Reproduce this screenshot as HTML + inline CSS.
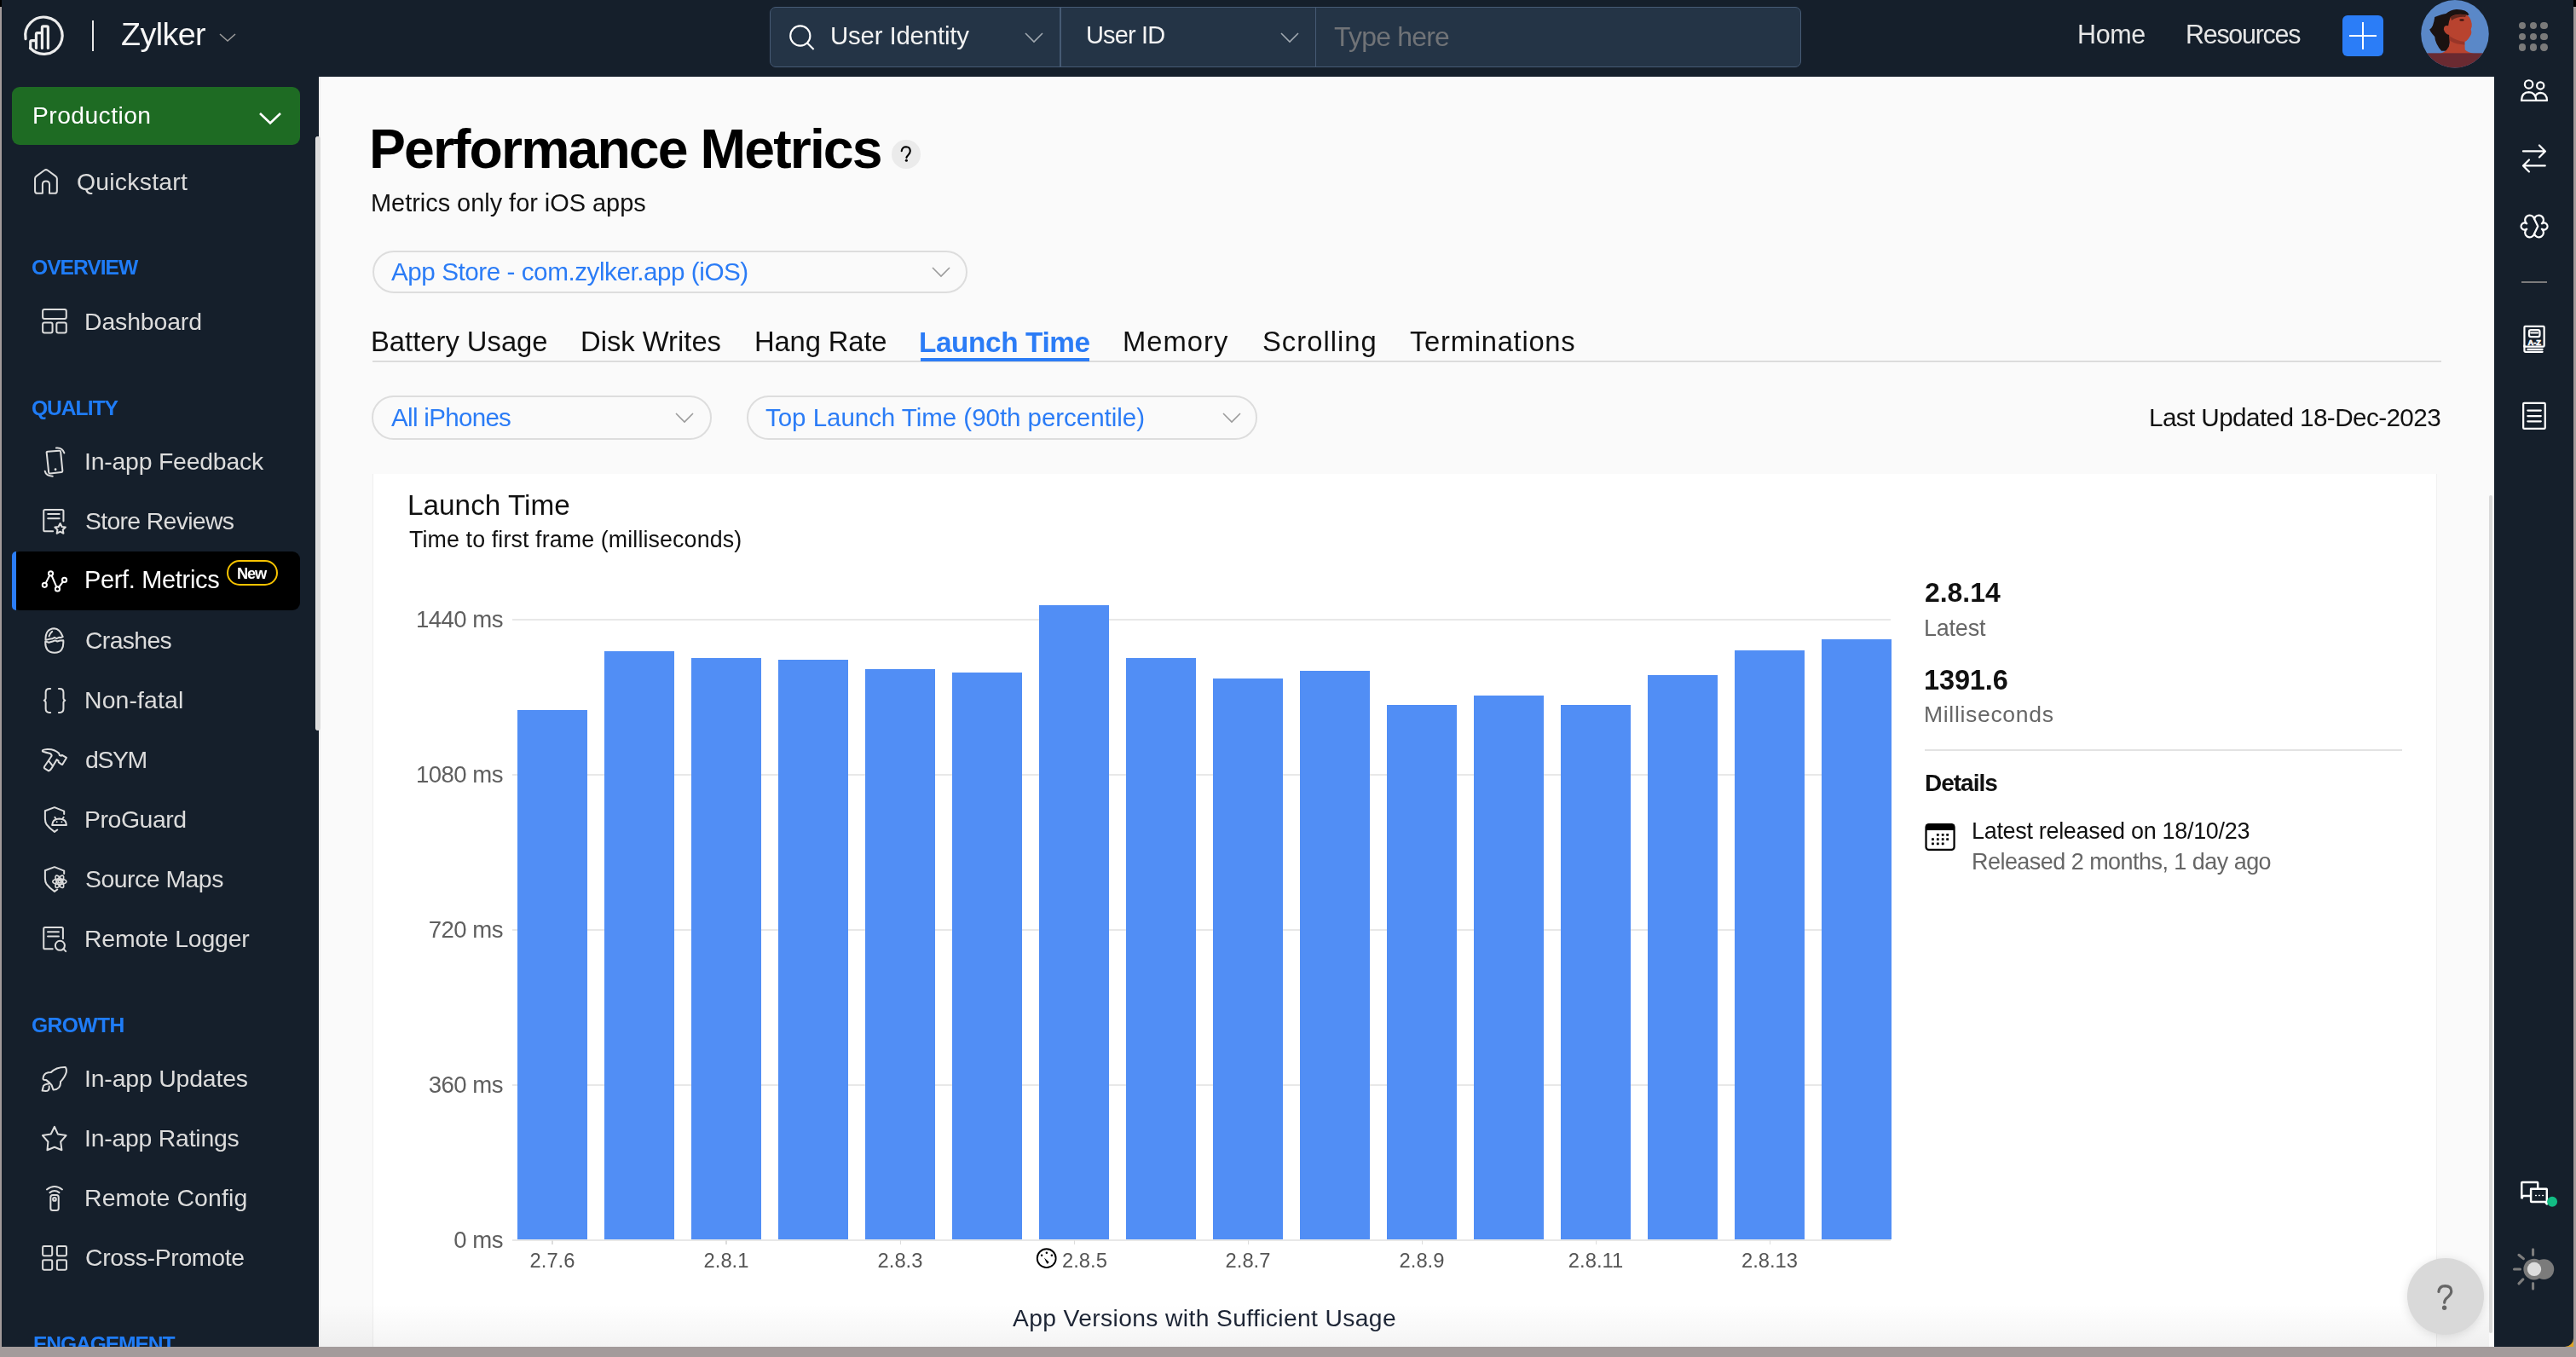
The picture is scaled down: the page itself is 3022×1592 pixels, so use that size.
<!DOCTYPE html>
<html><head><meta charset="utf-8"><title>Performance Metrics</title>
<style>
html,body{margin:0;padding:0;width:3022px;height:1592px;overflow:hidden;background:#a39b9b;}
body{position:relative;font-family:'Liberation Sans', sans-serif;}
.b{position:absolute;}
.t{position:absolute;white-space:nowrap;font-family:'Liberation Sans', sans-serif;will-change:transform;}
#root{position:absolute;left:0;top:0;width:3022px;height:1592px;transform-origin:0 0;overflow:hidden;background:#a39b9b;}
</style></head><body><div id="root">
<div class="b" style="left:0px;top:0px;width:3022px;height:1592px;background:#a39b9b;"></div>
<div class="b" style="left:0px;top:0px;width:3px;height:8px;background:#000;"></div>
<div class="b" style="left:3019px;top:0px;width:3px;height:8px;background:#000;"></div>
<div class="b" style="left:2px;top:0px;width:3017px;height:1580px;background:#151f2b;border-bottom-right-radius:10px;"></div>
<div class="b" style="left:3004px;top:1565px;width:15px;height:15px;background:#e0a526;z-index:0;"></div>
<div class="b" style="left:2px;top:0px;width:3017px;height:1580px;background:#151f2b;border-bottom-right-radius:10px;"></div>
<div class="b" style="left:374px;top:90px;width:2552px;height:1490px;background:#fafafa;"></div>
<svg class="b" style="left:20px;top:10px;width:70px;height:70px" viewBox="0 0 1357 1357">
<g fill="none" stroke="#ececec" stroke-width="62" stroke-linecap="round" stroke-linejoin="round">
<path d="M195 690 A420 420 0 1 1 300 900"/>
<path d="M305 905 V760 Q305 730 335 730 H435 V585 Q435 555 465 555 H570 V435 Q570 405 600 405 H675 Q705 405 705 435 V900"/>
<path d="M435 730 V900 M570 555 V900"/>
</g></svg>
<div class="b" style="left:107.5px;top:24px;width:2.5px;height:36px;background:#e6e6e6;"></div>
<div class="t" id="zylker" style="left:142.0px;top:22.0px;font-size:37.68px;line-height:37.68px;color:#f5f5f5;letter-spacing:-0.600px;">Zylker</div>
<svg class="b" style="left:256px;top:38px;width:22px;height:12px" viewBox="0 0 22 12"><path d="M2 2 L11 10 L20 2" fill="none" stroke="#9a9a9a" stroke-width="1.6"/></svg>
<div class="b" style="left:903px;top:8px;width:1210px;height:71px;background:#243446;border:1.6px solid #465a74;border-radius:7px;box-sizing:border-box;"></div>
<div class="b" style="left:1243.3px;top:9px;width:1.6px;height:69px;background:#465a74;"></div>
<div class="b" style="left:1542.9px;top:9px;width:1.6px;height:69px;background:#465a74;"></div>
<svg class="b" style="left:920px;top:24px;width:40px;height:40px" viewBox="0 0 40 40"><circle cx="18.8" cy="18" r="11.6" fill="none" stroke="#fff" stroke-width="2.1"/><path d="M27.3 26.8 L34.6 34" stroke="#fff" stroke-width="2.1" fill="none"/></svg>
<div class="t" id="uident" style="left:974.4px;top:26.8px;font-size:29.42px;line-height:29.42px;color:#f2f2f2;letter-spacing:-0.167px;">User Identity</div>
<svg class="b" style="left:1200px;top:36px;width:26px;height:16px" viewBox="0 0 26 16"><path d="M3 3 L13 13 L23 3" fill="none" stroke="#a0a8b0" stroke-width="1.6"/></svg>
<div class="t" id="uid" style="left:1274.2px;top:27.4px;font-size:28.99px;line-height:28.99px;color:#f2f2f2;letter-spacing:-0.833px;">User ID</div>
<svg class="b" style="left:1500px;top:36px;width:26px;height:16px" viewBox="0 0 26 16"><path d="M3 3 L13 13 L23 3" fill="none" stroke="#a0a8b0" stroke-width="1.6"/></svg>
<div class="t" id="typehere" style="left:1565.0px;top:27.9px;font-size:31.88px;line-height:31.88px;color:#707377;letter-spacing:-0.750px;">Type here</div>
<div class="t" id="home" style="left:2437.0px;top:25.1px;font-size:30.43px;line-height:30.43px;color:#e6e6e6;letter-spacing:-0.333px;">Home</div>
<div class="t" id="resources" style="left:2564.0px;top:25.1px;font-size:30.43px;line-height:30.43px;color:#e6e6e6;letter-spacing:-1.250px;">Resources</div>
<div class="b" style="left:2748px;top:18px;width:48px;height:48px;background:#2b7df7;border-radius:6px;"></div>
<div class="b" style="left:2771px;top:26px;width:2.2px;height:32px;background:#fff;"></div>
<div class="b" style="left:2756px;top:40.9px;width:32px;height:2.2px;background:#fff;"></div>
<svg class="b" style="left:2835px;top:0px;width:90px;height:90px" viewBox="0 0 1357 1357">
<defs><clipPath id="avc"><circle cx="678" cy="600" r="600"/></clipPath></defs>
<g clip-path="url(#avc)">
<rect width="1357" height="1357" fill="#5a88c8"/>
<path d="M700 165 Q880 160 930 260 L700 330 Q620 420 610 560 Q600 700 560 900 L440 900 Q330 780 320 650 Q240 560 230 520 Q300 480 320 300 Q450 250 520 240 Q600 170 700 165 Z" fill="#1a1211"/>
<path d="M600 300 Q700 230 880 260 Q960 300 975 420 Q985 470 960 520 Q985 590 945 640 Q900 720 850 740 L855 880 Q900 930 1010 950 L420 950 Q560 900 585 780 Q580 700 575 620 Q500 600 480 520 Q480 440 560 455 Q570 370 600 300 Z" fill="#b8432f"/>
<path d="M590 640 Q700 720 850 740 L850 790 Q700 790 590 720 Z" fill="#8a2f25" opacity="0.7"/>
<ellipse cx="800" cy="355" rx="42" ry="18" fill="#3a1510"/>
<path d="M600 300 Q700 240 880 262 L860 300 Q720 290 620 360 Z" fill="#2a1512" opacity="0.6"/>
<rect x="0" y="940" width="1357" height="420" fill="#6a2a31"/>
</g></svg>
<div class="b" style="left:2955.0px;top:26.0px;width:8.4px;height:8.4px;border-radius:50%;background:#7a7a7a"></div>
<div class="b" style="left:2955.0px;top:38.6px;width:8.4px;height:8.4px;border-radius:50%;background:#7a7a7a"></div>
<div class="b" style="left:2955.0px;top:51.2px;width:8.4px;height:8.4px;border-radius:50%;background:#7a7a7a"></div>
<div class="b" style="left:2967.6px;top:26.0px;width:8.4px;height:8.4px;border-radius:50%;background:#7a7a7a"></div>
<div class="b" style="left:2967.6px;top:38.6px;width:8.4px;height:8.4px;border-radius:50%;background:#7a7a7a"></div>
<div class="b" style="left:2967.6px;top:51.2px;width:8.4px;height:8.4px;border-radius:50%;background:#7a7a7a"></div>
<div class="b" style="left:2980.2px;top:26.0px;width:8.4px;height:8.4px;border-radius:50%;background:#7a7a7a"></div>
<div class="b" style="left:2980.2px;top:38.6px;width:8.4px;height:8.4px;border-radius:50%;background:#7a7a7a"></div>
<div class="b" style="left:2980.2px;top:51.2px;width:8.4px;height:8.4px;border-radius:50%;background:#7a7a7a"></div>
<div class="b" style="left:14px;top:102px;width:338px;height:68px;background:#1e6b23;border-radius:9px;"></div>
<div class="t" id="production" style="left:38.0px;top:121.0px;font-size:28.26px;line-height:28.26px;color:#ffffff;letter-spacing:0.444px;">Production</div>
<svg class="b" style="left:302px;top:130px;width:30px;height:18px" viewBox="0 0 30 18"><path d="M3 3 L15 14.5 L27 3" fill="none" stroke="#fff" stroke-width="2.6"/></svg>
<div class="b" style="left:374px;top:90px;width:2px;height:1490px;background:#ededed;"></div>
<div class="b" style="left:370px;top:160px;width:6px;height:697px;background:#dcdcdc;border-radius:3px;border-left:1px solid #ececec;box-sizing:border-box;"></div>
<div class="t" id="s_quick" style="left:90.0px;top:198.5px;font-size:28.41px;line-height:28.41px;color:#dcdcdc;letter-spacing:0.222px;">Quickstart</div>
<div class="t" id="s_dash" style="left:99.0px;top:362.9px;font-size:28.41px;line-height:28.41px;color:#dcdcdc;letter-spacing:-0.125px;">Dashboard</div>
<div class="t" id="s_fb" style="left:99.0px;top:526.9px;font-size:28.41px;line-height:28.41px;color:#dcdcdc;letter-spacing:-0.214px;">In-app Feedback</div>
<div class="t" id="s_sr" style="left:100.0px;top:596.9px;font-size:28.41px;line-height:28.41px;color:#dcdcdc;letter-spacing:-0.683px;">Store Reviews</div>
<div class="t" id="s_crash" style="left:100.0px;top:736.9px;font-size:28.41px;line-height:28.41px;color:#dcdcdc;letter-spacing:-0.667px;">Crashes</div>
<div class="t" id="s_nonfatal" style="left:99.0px;top:806.9px;font-size:28.41px;line-height:28.41px;color:#dcdcdc;letter-spacing:0.125px;">Non-fatal</div>
<div class="t" id="s_dsym" style="left:100.0px;top:877.4px;font-size:28.41px;line-height:28.41px;color:#dcdcdc;letter-spacing:-1.400px;">dSYM</div>
<div class="t" id="s_proguard" style="left:99.0px;top:947.4px;font-size:28.41px;line-height:28.41px;color:#dcdcdc;letter-spacing:-0.429px;">ProGuard</div>
<div class="t" id="s_srcmaps" style="left:100.0px;top:1017.4px;font-size:28.41px;line-height:28.41px;color:#dcdcdc;letter-spacing:-0.500px;">Source Maps</div>
<div class="t" id="s_rlog" style="left:99.0px;top:1087.4px;font-size:28.41px;line-height:28.41px;color:#dcdcdc;letter-spacing:-0.167px;">Remote Logger</div>
<div class="t" id="s_upd" style="left:99.0px;top:1250.9px;font-size:28.41px;line-height:28.41px;color:#dcdcdc;letter-spacing:-0.169px;">In-app Updates</div>
<div class="t" id="s_rat" style="left:99.0px;top:1320.9px;font-size:28.41px;line-height:28.41px;color:#dcdcdc;letter-spacing:-0.231px;">In-app Ratings</div>
<div class="t" id="s_rcfg" style="left:99.0px;top:1390.9px;font-size:28.41px;line-height:28.41px;color:#dcdcdc;letter-spacing:0.150px;">Remote Config</div>
<div class="t" id="s_xpro" style="left:100.0px;top:1460.9px;font-size:28.41px;line-height:28.41px;color:#dcdcdc;letter-spacing:-0.333px;">Cross-Promote</div>
<div class="t" id="h_ov" style="left:37.4px;top:302.1px;font-size:24.64px;line-height:24.64px;color:#1f7cf7;font-weight:700;letter-spacing:-1.000px;">OVERVIEW</div>
<div class="t" id="h_qu" style="left:37.4px;top:466.6px;font-size:24.64px;line-height:24.64px;color:#1f7cf7;font-weight:700;letter-spacing:-1.033px;">QUALITY</div>
<div class="t" id="h_gr" style="left:37.4px;top:1190.6px;font-size:24.64px;line-height:24.64px;color:#1f7cf7;font-weight:700;letter-spacing:-0.600px;">GROWTH</div>
<div class="t" id="h_en" style="left:38.6px;top:1565.1px;font-size:24.64px;line-height:24.64px;color:#1f7cf7;font-weight:700;letter-spacing:-1.100px;">ENGAGEMENT</div>
<div class="b" style="left:14px;top:647px;width:337.5px;height:69px;background:#000000;border-radius:9px;overflow:hidden;"></div>
<div class="b" style="left:14px;top:647px;width:4.5px;height:69px;background:#2b7df7;border-radius:9px 0 0 9px;"></div>
<div class="t" id="s_perf" style="left:99.0px;top:666.4px;font-size:28.99px;line-height:28.99px;color:#ffffff;letter-spacing:-0.333px;">Perf. Metrics</div>
<div class="b" style="left:266px;top:657px;width:60px;height:30px;background:transparent;border:2.6px solid #f7c300;border-radius:16px;box-sizing:border-box;"></div>
<div class="t" id="newb" style="left:278.0px;top:663.5px;font-size:18.26px;line-height:18.26px;color:#ffffff;font-weight:700;letter-spacing:-1.200px;">New</div>
<div class="b" style="left:2px;top:1580px;width:372px;height:12px;background:#a39b9b;"></div>
<div class="t" id="title" style="left:433.0px;top:143.1px;font-size:64.35px;line-height:64.35px;color:#000;font-weight:700;letter-spacing:-1.889px;">Performance Metrics</div>
<div class="b" style="left:1046.2px;top:164.2px;width:33.6px;height:33.6px;border-radius:50%;background:#ebebeb"></div>
<svg class="b" style="left:1035px;top:155px;width:55px;height:55px" viewBox="0 0 1357 1357"><path d="M560 545 Q580 425 690 425 Q805 430 810 545 Q810 610 745 670 Q705 710 700 740" fill="none" stroke="#000" stroke-width="52" stroke-linecap="round"/><circle cx="700" cy="820" r="38" fill="#000"/></svg>
<div class="t" id="subtitle" style="left:435.0px;top:224.4px;font-size:28.99px;line-height:28.99px;color:#111;letter-spacing:-0.042px;">Metrics only for iOS apps</div>
<div class="b" style="left:437px;top:294px;width:698px;height:50px;background:transparent;border:2px solid #dddddd;border-radius:25.0px;box-sizing:border-box;"></div>
<svg class="b" style="left:1092px;top:311.7px;width:24px;height:15px" viewBox="0 0 24 15"><path d="M2 2 L12 12 L22 2" fill="none" stroke="#9b9b9b" stroke-width="1.6"/></svg>
<div class="t" id="appstore" style="left:458.8px;top:303.7px;font-size:29.71px;line-height:29.71px;color:#2b7cf6;letter-spacing:-0.481px;">App Store - com.zylker.app (iOS)</div>
<div class="t" id="tb_bat" style="left:435.0px;top:385.0px;font-size:32.75px;line-height:32.75px;color:#111;">Battery Usage</div>
<div class="t" id="tb_disk" style="left:681.2px;top:385.0px;font-size:32.75px;line-height:32.75px;color:#111;">Disk Writes</div>
<div class="t" id="tb_hang" style="left:885.2px;top:385.0px;font-size:32.75px;line-height:32.75px;color:#111;letter-spacing:-0.125px;">Hang Rate</div>
<div class="t" id="tb_mem" style="left:1317.0px;top:385.0px;font-size:32.75px;line-height:32.75px;color:#111;letter-spacing:1.000px;">Memory</div>
<div class="t" id="tb_scr" style="left:1481.0px;top:385.0px;font-size:32.75px;line-height:32.75px;color:#111;letter-spacing:1.012px;">Scrolling</div>
<div class="t" id="tb_term" style="left:1654.0px;top:385.0px;font-size:32.75px;line-height:32.75px;color:#111;letter-spacing:0.727px;">Terminations</div>
<div class="t" id="tb_launch" style="left:1078.0px;top:384.5px;font-size:33.33px;line-height:33.33px;color:#2b7cf6;font-weight:700;letter-spacing:-0.390px;">Launch Time</div>
<div class="b" style="left:437px;top:423px;width:2427px;height:2px;background:#dcdcdc;"></div>
<div class="b" style="left:1080px;top:419.5px;width:198px;height:4.5px;background:#2b7cf6;"></div>
<div class="b" style="left:436.4px;top:464.3px;width:398.6px;height:51.4px;background:transparent;border:2px solid #dddddd;border-radius:25.7px;box-sizing:border-box;"></div>
<svg class="b" style="left:791.4px;top:482.9px;width:24px;height:15px" viewBox="0 0 24 15"><path d="M2 2 L12 12 L22 2" fill="none" stroke="#9b9b9b" stroke-width="1.6"/></svg>
<div class="t" id="alliph" style="left:459.0px;top:474.9px;font-size:29.57px;line-height:29.57px;color:#2b7cf6;letter-spacing:-0.700px;">All iPhones</div>
<div class="b" style="left:876px;top:464.3px;width:599px;height:51.4px;background:transparent;border:2px solid #dddddd;border-radius:25.7px;box-sizing:border-box;"></div>
<svg class="b" style="left:1432.5px;top:482.9px;width:24px;height:15px" viewBox="0 0 24 15"><path d="M2 2 L12 12 L22 2" fill="none" stroke="#9b9b9b" stroke-width="1.6"/></svg>
<div class="t" id="toplaunch" style="left:898.0px;top:474.9px;font-size:29.57px;line-height:29.57px;color:#2b7cf6;letter-spacing:-0.062px;">Top Launch Time (90th percentile)</div>
<div class="t" id="lastupd" style="left:2520.6px;top:474.7px;font-size:29.71px;line-height:29.71px;color:#111;letter-spacing:-0.609px;">Last Updated 18-Dec-2023</div>
<div class="b" style="left:437px;top:556px;width:2422px;height:1100px;background:#ffffff;border-left:1.5px solid #eeeeee;border-right:1px solid #f1f1f1;box-sizing:border-box;"></div>
<div class="t" id="c_title" style="left:477.6px;top:575.7px;font-size:33.33px;line-height:33.33px;color:#111;">Launch Time</div>
<div class="t" id="c_sub" style="left:479.6px;top:619.8px;font-size:26.81px;line-height:26.81px;color:#111;letter-spacing:0.121px;">Time to first frame (milliseconds)</div>
<div class="b" style="left:601px;top:725.7px;width:1617px;height:2px;background:#e8e8e8;"></div>
<div class="t" id="yl0" style="left:380px;width:210px;text-align:right;top:713.1px;font-size:27.54px;line-height:27.54px;color:#5f5f5f;letter-spacing:-0.5px">1440 ms</div>
<div class="b" style="left:601px;top:907.7px;width:1617px;height:2px;background:#e8e8e8;"></div>
<div class="t" id="yl1" style="left:380px;width:210px;text-align:right;top:895.1px;font-size:27.54px;line-height:27.54px;color:#5f5f5f;letter-spacing:-0.5px">1080 ms</div>
<div class="b" style="left:601px;top:1089.7px;width:1617px;height:2px;background:#e8e8e8;"></div>
<div class="t" id="yl2" style="left:380px;width:210px;text-align:right;top:1077.1px;font-size:27.54px;line-height:27.54px;color:#5f5f5f;letter-spacing:-0.5px">720 ms</div>
<div class="b" style="left:601px;top:1271.7px;width:1617px;height:2px;background:#e8e8e8;"></div>
<div class="t" id="yl3" style="left:380px;width:210px;text-align:right;top:1259.1px;font-size:27.54px;line-height:27.54px;color:#5f5f5f;letter-spacing:-0.5px">360 ms</div>
<div class="b" style="left:601px;top:1453.7px;width:1617px;height:2px;background:#e8e8e8;"></div>
<div class="t" id="yl4" style="left:380px;width:210px;text-align:right;top:1441.1px;font-size:27.54px;line-height:27.54px;color:#5f5f5f;letter-spacing:-0.5px">0 ms</div>
<div class="b" style="left:607.4px;top:832.8px;width:81.6px;height:621.4px;background:#518ef5;"></div>
<div class="b" style="left:709.4px;top:764.3px;width:81.6px;height:689.9px;background:#518ef5;"></div>
<div class="b" style="left:811.4px;top:772px;width:81.6px;height:682.2px;background:#518ef5;"></div>
<div class="b" style="left:913.4px;top:774px;width:81.6px;height:680.2px;background:#518ef5;"></div>
<div class="b" style="left:1015.4px;top:784.8px;width:81.6px;height:669.4px;background:#518ef5;"></div>
<div class="b" style="left:1117.4px;top:789px;width:81.6px;height:665.2px;background:#518ef5;"></div>
<div class="b" style="left:1219.4px;top:709.8px;width:81.6px;height:744.4px;background:#518ef5;"></div>
<div class="b" style="left:1321.4px;top:771.5px;width:81.6px;height:682.7px;background:#518ef5;"></div>
<div class="b" style="left:1423.4px;top:796px;width:81.6px;height:658.2px;background:#518ef5;"></div>
<div class="b" style="left:1525.4px;top:786.8px;width:81.6px;height:667.4px;background:#518ef5;"></div>
<div class="b" style="left:1627.4px;top:826.5px;width:81.6px;height:627.7px;background:#518ef5;"></div>
<div class="b" style="left:1729.4px;top:816px;width:81.6px;height:638.2px;background:#518ef5;"></div>
<div class="b" style="left:1831.4px;top:827px;width:81.6px;height:627.2px;background:#518ef5;"></div>
<div class="b" style="left:1933.4px;top:791.5px;width:81.6px;height:662.7px;background:#518ef5;"></div>
<div class="b" style="left:2035.4px;top:763.3px;width:81.6px;height:690.9px;background:#518ef5;"></div>
<div class="b" style="left:2137.4px;top:750.1px;width:81.6px;height:704.1px;background:#518ef5;"></div>
<div class="b" style="left:647.4px;top:1455px;width:1.5px;height:5px;background:#dddddd;"></div>
<div class="t" id="xl0" style="left:548.2px;width:200px;text-align:center;top:1466.8px;font-size:23.77px;line-height:23.77px;color:#555">2.7.6</div>
<div class="b" style="left:851.4px;top:1455px;width:1.5px;height:5px;background:#dddddd;"></div>
<div class="t" id="xl2" style="left:752.2px;width:200px;text-align:center;top:1466.8px;font-size:23.77px;line-height:23.77px;color:#555">2.8.1</div>
<div class="b" style="left:1055.5px;top:1455px;width:1.5px;height:5px;background:#dddddd;"></div>
<div class="t" id="xl4" style="left:956.2px;width:200px;text-align:center;top:1466.8px;font-size:23.77px;line-height:23.77px;color:#555">2.8.3</div>
<div class="b" style="left:1259.5px;top:1455px;width:1.5px;height:5px;background:#dddddd;"></div>
<div class="t" id="xl6" style="left:1246px;top:1466.8px;font-size:23.77px;line-height:23.77px;color:#555">2.8.5</div>
<div class="b" style="left:1463.5px;top:1455px;width:1.5px;height:5px;background:#dddddd;"></div>
<div class="t" id="xl8" style="left:1364.2px;width:200px;text-align:center;top:1466.8px;font-size:23.77px;line-height:23.77px;color:#555">2.8.7</div>
<div class="b" style="left:1667.5px;top:1455px;width:1.5px;height:5px;background:#dddddd;"></div>
<div class="t" id="xl10" style="left:1568.2px;width:200px;text-align:center;top:1466.8px;font-size:23.77px;line-height:23.77px;color:#555">2.8.9</div>
<div class="b" style="left:1871.5px;top:1455px;width:1.5px;height:5px;background:#dddddd;"></div>
<div class="t" id="xl12" style="left:1772.2px;width:200px;text-align:center;top:1466.8px;font-size:23.77px;line-height:23.77px;color:#555">2.8.11</div>
<div class="b" style="left:2075.5px;top:1455px;width:1.5px;height:5px;background:#dddddd;"></div>
<div class="t" id="xl14" style="left:1976.2px;width:200px;text-align:center;top:1466.8px;font-size:23.77px;line-height:23.77px;color:#555">2.8.13</div>
<svg class="b" style="left:1205px;top:1455px;width:45px;height:45px" viewBox="0 0 1357 1357"><circle cx="685" cy="640" r="330" fill="none" stroke="#000" stroke-width="55"/><circle cx="515" cy="535" r="38" fill="#000"/><circle cx="690" cy="445" r="38" fill="#000"/><circle cx="870" cy="535" r="38" fill="#000"/><path d="M600 615 L770 770 Q760 840 700 830 Z" fill="#000"/></svg>
<div class="b" style="left:376px;top:1530px;width:2544px;height:50px;background:linear-gradient(rgba(0,0,0,0),rgba(0,0,0,0.045));"></div>
<div class="t" id="xaxis" style="left:1188.0px;top:1532.0px;font-size:28.26px;line-height:28.26px;color:#1d2535;letter-spacing:0.364px;">App Versions with Sufficient Usage</div>
<div class="t" id="r_ver" style="left:2257.6px;top:679.9px;font-size:31.88px;line-height:31.88px;color:#111;font-weight:700;">2.8.14</div>
<div class="t" id="r_latest" style="left:2256.6px;top:723.5px;font-size:26.96px;line-height:26.96px;color:#666;letter-spacing:-0.200px;">Latest</div>
<div class="t" id="r_val" style="left:2256.6px;top:782.2px;font-size:32.46px;line-height:32.46px;color:#111;font-weight:700;letter-spacing:-0.100px;">1391.6</div>
<div class="t" id="r_ms" style="left:2256.6px;top:825.3px;font-size:26.52px;line-height:26.52px;color:#666;letter-spacing:0.682px;">Milliseconds</div>
<div class="b" style="left:2258px;top:878.6px;width:560px;height:2px;background:#e2e2e2;"></div>
<div class="t" id="r_det" style="left:2257.6px;top:904.5px;font-size:27.97px;line-height:27.97px;color:#111;font-weight:700;letter-spacing:-0.983px;">Details</div>
<svg class="b" style="left:2250px;top:955px;width:55px;height:55px" viewBox="0 0 1357 1357"><rect x="235" y="300" width="815" height="735" rx="80" fill="none" stroke="#000" stroke-width="55"/><rect x="235" y="300" width="815" height="170" fill="#000"/><rect x="540" y="565" width="70" height="70" rx="10" fill="#000"/><rect x="685" y="565" width="70" height="70" rx="10" fill="#000"/><rect x="820" y="565" width="70" height="70" rx="10" fill="#000"/><rect x="395" y="695" width="70" height="70" rx="10" fill="#000"/><rect x="540" y="695" width="70" height="70" rx="10" fill="#000"/><rect x="685" y="695" width="70" height="70" rx="10" fill="#000"/><rect x="820" y="695" width="70" height="70" rx="10" fill="#000"/><rect x="395" y="825" width="70" height="70" rx="10" fill="#000"/><rect x="540" y="825" width="70" height="70" rx="10" fill="#000"/><rect x="685" y="825" width="70" height="70" rx="10" fill="#000"/></svg>
<div class="t" id="r_rel" style="left:2313.0px;top:962.3px;font-size:26.96px;line-height:26.96px;color:#111;letter-spacing:-0.300px;">Latest released on 18/10/23</div>
<div class="t" id="r_ago" style="left:2313.0px;top:998.1px;font-size:26.96px;line-height:26.96px;color:#666;letter-spacing:-0.519px;">Released 2 months, 1 day ago</div>
<div class="b" style="left:2920px;top:581px;width:4px;height:983px;background:#d9d9d9;border-radius:2px;"></div>
<div class="b" style="left:2824px;top:1476px;width:90px;height:90px;border-radius:50%;background:#d9d9d9;box-shadow:0 2px 12px rgba(0,0,0,0.12)"></div>
<svg class="b" style="left:2844px;top:1499px;width:50px;height:50px" viewBox="0 0 50 50"><path d="M16.9 16.5 Q17.6 9.6 24.4 9.6 Q31.8 9.9 31.8 15.8 Q31.8 19 28.4 22 Q23.6 25.6 23.6 29.3" fill="none" stroke="#666" stroke-width="3.1" stroke-linecap="round"/><circle cx="23.6" cy="35.3" r="2.7" fill="#666"/></svg>
<svg class="b" style="left:2948px;top:82px;width:50px;height:50px" viewBox="0 0 1357 1357"><g fill="none" stroke="#ffffff" stroke-width="60" stroke-linecap="round" stroke-linejoin="round"><circle cx="505" cy="460" r="128"/><circle cx="875" cy="500" r="112"/><path d="M272 975 Q280 710 505 708 Q720 712 740 960"/><path d="M722 815 Q780 730 875 730 Q1075 735 1085 975 M272 975 H1085"/></g></svg>
<svg class="b" style="left:2948px;top:162px;width:50px;height:50px" viewBox="0 0 1357 1357"><g fill="none" stroke="#ffffff" stroke-width="60" stroke-linecap="round" stroke-linejoin="round"><path d="M325 420 H1020 M840 230 L1030 420 L840 610"/><path d="M1025 880 H325 M515 690 L325 880 L515 1070"/></g></svg>
<svg class="b" style="left:2948px;top:241px;width:50px;height:50px" viewBox="0 0 1357 1357"><g fill="none" stroke="#ffffff" stroke-width="60" stroke-linecap="round" stroke-linejoin="round"><path d="M680 425 A150 150 0 1 0 440 580 A110 110 0 1 0 440 750 A150 150 0 1 0 680 905"/><path d="M680 425 A150 150 0 1 1 920 580 A110 110 0 1 1 920 750 A150 150 0 1 1 680 905"/><path d="M680 425 L795 665 L680 905"/></g></svg>
<div class="b" style="left:2958px;top:330px;width:30px;height:2px;background:#7b7b7b;"></div>
<svg class="b" style="left:2948px;top:373px;width:50px;height:50px" viewBox="0 0 1357 1357"><g fill="none" stroke="#ffffff" stroke-width="60" stroke-linecap="round" stroke-linejoin="round"><path d="M365 880 V300 Q365 270 395 270 H965 Q995 270 995 300 V880 Q995 915 960 915 H365 Z"/><path d="M365 880 V1040 Q365 1080 405 1080 H940 M470 1000 H940"/><rect x="515" y="385" width="340" height="215" rx="60"/><path d="M575 475 H790" /></g><text x="685" y="855" font-family="Liberation Sans" font-weight="700" font-size="250" fill="#fff" stroke="#fff" stroke-width="18" text-anchor="middle">A-Z</text></svg>
<svg class="b" style="left:2948px;top:463px;width:50px;height:50px" viewBox="0 0 1357 1357"><g fill="none" stroke="#ffffff" stroke-width="60" stroke-linecap="round" stroke-linejoin="round"><rect x="330" y="270" width="695" height="810" rx="30"/><path d="M470 505 H890 M470 680 H890 M470 850 H890"/></g></svg>
<svg class="b" style="left:2945px;top:1370px;width:60px;height:60px" viewBox="0 0 1357 1357"><g fill="none" stroke="#fff" stroke-width="55" stroke-linejoin="round">
<path d="M300 820 V400 Q300 385 315 385 H710 Q728 385 728 400 V545"/>
<path d="M300 820 L335 745 H545"/>
<path d="M545 560 H960 Q968 560 968 575 V960 L925 905 H560 Q545 905 545 890 Z"/>
</g><g fill="#fff"><rect x="655" y="720" width="45" height="30"/><rect x="745" y="720" width="45" height="30"/><rect x="840" y="720" width="45" height="30"/></g>
<circle cx="1110" cy="900" r="135" fill="#12bc84"/></svg>
<svg class="b" style="left:2940px;top:1455px;width:70px;height:70px" viewBox="0 0 1357 1357"><g stroke="#7d7d7d" stroke-width="60" stroke-linecap="round">
<path d="M612 210 V335 M612 980 V1105 M185 660 H320 M290 335 L395 420 M290 985 L385 890"/></g>
<circle cx="860" cy="660" r="230" fill="#7b7b7b"/><circle cx="635" cy="660" r="240" fill="#7b7b7b"/><circle cx="640" cy="658" r="158" fill="#dddddd"/></svg>
<svg class="b" style="left:30px;top:190px;width:60px;height:50px" viewBox="0 0 1628 1357"><path fill="none" stroke="#dcdcdc" stroke-width="55" stroke-linecap="round" stroke-linejoin="round" d="M540 1000 H380 Q300 1000 300 920 V530 Q300 480 345 450 L600 265 Q650 230 700 265 L955 450 Q1000 480 1000 530 V920 Q1000 1000 920 1000 H760 V715 Q760 610 650 610 Q540 610 540 715 Z"/></svg>
<svg class="b" style="left:40px;top:350px;width:50px;height:50px" viewBox="0 0 1357 1357"><g fill="none" stroke="#dcdcdc" stroke-width="55" stroke-linecap="round" stroke-linejoin="round"><rect x="275" y="355" width="750" height="295" rx="55"/><rect x="275" y="775" width="310" height="325" rx="55"/><rect x="715" y="775" width="310" height="325" rx="55"/></g></svg>
<svg class="b" style="left:40px;top:520px;width:50px;height:50px" viewBox="0 0 1357 1357"><g fill="none" stroke="#dcdcdc" stroke-width="55" stroke-linecap="round" stroke-linejoin="round"><path d="M400 310 Q385 270 440 265 L800 235 Q840 232 845 275 L905 880 Q908 920 868 925 L510 962 Q470 965 466 925 Z"/><path d="M705 150 Q900 130 960 310"/><path d="M345 890 Q380 1040 590 1050"/></g><circle cx="680" cy="835" r="38" fill="#dcdcdc"/></svg>
<svg class="b" style="left:40px;top:590px;width:50px;height:50px" viewBox="0 0 1357 1357"><g fill="none" stroke="#dcdcdc" stroke-width="55" stroke-linecap="round" stroke-linejoin="round"><path d="M600 905 H350 Q305 905 305 860 V260 Q305 215 350 215 H890 Q935 215 935 260 V580"/><path d="M440 355 H805 M440 495 H805"/><path d="M830 650 L885 760 L1000 775 L915 855 L935 970 L830 915 L725 970 L745 855 L660 775 L775 760 Z"/></g></svg>
<svg class="b" style="left:40px;top:655px;width:50px;height:50px" viewBox="0 0 1357 1357"><g fill="none" stroke="#ffffff" stroke-width="55" stroke-linecap="round"><circle cx="335" cy="850" r="70"/><circle cx="530" cy="485" r="70"/><circle cx="745" cy="975" r="70"/><circle cx="965" cy="690" r="70"/><path d="M370 790 L495 545 M560 550 L715 910 M790 920 L920 745"/></g></svg>
<svg class="b" style="left:40px;top:725px;width:50px;height:50px" viewBox="0 0 1357 1357"><g fill="none" stroke="#dcdcdc" stroke-width="55" stroke-linecap="round" stroke-linejoin="round"><path d="M365 700 Q360 350 640 335 Q820 345 915 600 L850 625 L800 615 L720 655 L650 620 L580 660 L480 675 L390 700 Z"/><path d="M360 745 L470 780 L590 745 L670 715 L740 745 L820 720 L930 715 Q960 1110 650 1105 Q340 1100 360 745 Z"/><path d="M475 580 Q510 470 575 430"/></g></svg>
<svg class="b" style="left:40px;top:795px;width:50px;height:50px" viewBox="0 0 1357 1357"><g fill="none" stroke="#dcdcdc" stroke-width="55" stroke-linecap="round" stroke-linejoin="round"><path d="M520 350 H490 Q370 350 370 470 V660 Q370 705 320 725 Q370 745 370 790 V990 Q370 1110 490 1110 H520"/><path d="M785 350 H815 Q935 350 935 470 V660 Q935 705 985 725 Q935 745 935 790 V990 Q935 1110 815 1110 H785"/></g></svg>
<svg class="b" style="left:40px;top:865px;width:50px;height:50px" viewBox="0 0 1357 1357"><g fill="none" stroke="#dcdcdc" stroke-width="55" stroke-linecap="round" stroke-linejoin="round"><path d="M560 590 Q560 520 460 500 Q300 470 270 445 Q240 395 420 380 Q650 370 790 510 L810 570 L870 590 L890 565 L1030 650 L900 870 L860 855 L780 790 L775 750 L720 710 L580 950 Q530 1050 460 1070 L330 990 Q310 960 330 930 Z"/><path d="M460 745 L590 905"/></g></svg>
<svg class="b" style="left:40px;top:935px;width:50px;height:50px" viewBox="0 0 1357 1357"><g fill="none" stroke="#dcdcdc" stroke-width="55" stroke-linecap="round" stroke-linejoin="round"><path d="M740 1045 L650 1110 Q480 990 400 880 Q350 800 350 690 V440 L650 330 L955 450 V540"/><path d="M575 895 Q580 700 800 690 Q1030 700 1030 895 Z M660 645 L700 705 M940 645 L900 705"/></g><circle cx="725" cy="795" r="25" fill="#dcdcdc"/><circle cx="880" cy="795" r="25" fill="#dcdcdc"/></svg>
<svg class="b" style="left:40px;top:1005px;width:50px;height:50px" viewBox="0 0 1357 1357"><g fill="none" stroke="#dcdcdc" stroke-width="55" stroke-linecap="round" stroke-linejoin="round"><path d="M740 1045 L650 1110 Q480 990 400 880 Q350 800 350 690 V440 L650 330 L955 450 V540"/></g><g fill="none" stroke="#dcdcdc" stroke-width="45"><ellipse cx="810" cy="795" rx="220" ry="85"/><ellipse cx="810" cy="795" rx="220" ry="85" transform="rotate(60 810 795)"/><ellipse cx="810" cy="795" rx="220" ry="85" transform="rotate(-60 810 795)"/><circle cx="810" cy="795" r="45"/></g></svg>
<svg class="b" style="left:40px;top:1075px;width:50px;height:50px" viewBox="0 0 1357 1357"><g fill="none" stroke="#dcdcdc" stroke-width="55" stroke-linecap="round" stroke-linejoin="round"><path d="M590 1040 H350 Q305 1040 305 995 V395 Q305 350 350 350 H875 Q920 350 920 395 V715"/><path d="M435 495 H785 M435 635 H785"/><circle cx="825" cy="930" r="150"/><path d="M935 1035 L1010 1115"/></g></svg>
<svg class="b" style="left:40px;top:1240px;width:50px;height:50px" viewBox="0 0 1357 1357"><g fill="none" stroke="#dcdcdc" stroke-width="55" stroke-linecap="round" stroke-linejoin="round"><path d="M540 490 Q700 320 990 325 Q1040 350 1025 490 Q985 640 840 790 Q850 900 790 975 Q720 1050 610 1045 Q580 960 560 900 Q480 800 390 735 Q300 740 285 700 Q290 570 380 520 Q440 490 540 490 Z"/><path d="M470 855 Q410 855 340 885 Q280 920 290 960 Q270 1030 260 1075 Q360 1090 420 1080 Q490 1050 480 930"/></g></svg>
<svg class="b" style="left:40px;top:1310px;width:50px;height:50px" viewBox="0 0 1357 1357"><g fill="none" stroke="#dcdcdc" stroke-width="55" stroke-linecap="round" stroke-linejoin="round"><path d="M650 320 L755 555 L1020 600 L845 800 L880 1065 L650 970 L420 1065 L445 800 L270 600 L535 555 Z"/></g></svg>
<svg class="b" style="left:40px;top:1380px;width:50px;height:50px" viewBox="0 0 1357 1357"><g fill="none" stroke="#dcdcdc" stroke-width="55" stroke-linecap="round" stroke-linejoin="round"><path d="M405 420 Q650 230 895 420 M500 520 Q650 400 800 520"/><rect x="525" y="600" width="255" height="485" rx="70"/><circle cx="650" cy="730" r="50"/></g></svg>
<svg class="b" style="left:40px;top:1450px;width:50px;height:50px" viewBox="0 0 1357 1357"><g fill="none" stroke="#dcdcdc" stroke-width="55" stroke-linecap="round" stroke-linejoin="round"><rect x="275" y="325" width="300" height="305" rx="40"/><rect x="730" y="325" width="300" height="305" rx="40"/><rect x="275" y="765" width="300" height="315" rx="40"/><rect x="730" y="765" width="300" height="315" rx="40"/></g></svg>
<div class="b" style="left:0px;top:1580px;width:3022px;height:12px;background:#a39b9b;"></div>
<div class="b" style="left:3019px;top:8px;width:3px;height:1584px;background:#a39b9b;"></div>
<div class="b" style="left:0px;top:8px;width:2px;height:1584px;background:#a39b9b;"></div>
</div>
<script>(function(){var w=window.innerWidth||3022;var s=w/3022;if(Math.abs(s-1)>0.002){document.getElementById('root').style.transform='scale('+s+')';}})();</script>
</body></html>
